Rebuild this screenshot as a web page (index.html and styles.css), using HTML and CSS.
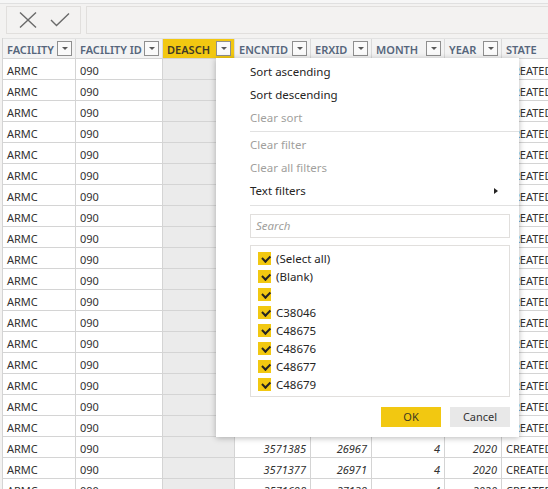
FILE: index.html
```html
<!DOCTYPE html>
<html>
<head>
<meta charset="utf-8">
<link rel="stylesheet" href="styles.css">
</head>
<body>
<div class="app">
  <div class="topstrip"></div>
  <div class="formula">
    <div class="fbtns">
      <svg class="ico" width="18" height="16" viewBox="0 0 18 16"><path d="M1 0.5 L17 15.5 M17 0.5 L1 15.5" stroke="#6a6a6a" stroke-width="1.4" fill="none"/></svg>
      <svg class="ico" width="20" height="14" viewBox="0 0 20 14"><path d="M1 7 L6.5 12.5 L19 0.5" stroke="#6a6a6a" stroke-width="1.4" fill="none"/></svg>
    </div>
    <div class="finput"></div>
  </div>
  <div class="grid">
    <div class="row head">
      <div class="hc"><span>FACILITY</span><i class="fb"></i></div>
      <div class="hc"><span>FACILITY ID</span><i class="fb"></i></div>
      <div class="hc sel"><span>DEASCH</span><i class="fb"></i></div>
      <div class="hc"><span>ENCNTID</span><i class="fb"></i></div>
      <div class="hc"><span>ERXID</span><i class="fb"></i></div>
      <div class="hc"><span>MONTH</span><i class="fb"></i></div>
      <div class="hc"><span>YEAR</span><i class="fb"></i></div>
      <div class="hc"><span>STATE</span><i class="fb"></i></div>
    </div>
    <div id="rows"></div>
  </div>

  <div class="popup">
    <div class="mi">Sort ascending</div>
    <div class="mi">Sort descending</div>
    <div class="mi dis">Clear sort</div>
    <div class="sep"></div>
    <div class="mi dis">Clear filter</div>
    <div class="mi dis">Clear all filters</div>
    <div class="mi sub">Text filters<i class="arrow"></i></div>
    <div class="sep s2"></div>
    <div class="search">Search</div>
    <div class="list">
      <div class="li"><i class="cb"></i>(Select all)</div>
      <div class="li"><i class="cb"></i>(Blank)</div>
      <div class="li"><i class="cb"></i></div>
      <div class="li"><i class="cb"></i>C38046</div>
      <div class="li"><i class="cb"></i>C48675</div>
      <div class="li"><i class="cb"></i>C48676</div>
      <div class="li"><i class="cb"></i>C48677</div>
      <div class="li"><i class="cb"></i>C48679</div>
    </div>
    <div class="btns">
      <div class="btn ok">OK</div>
      <div class="btn cancel">Cancel</div>
    </div>
  </div>
</div>
<script>
var data = [
["3571203","26881"],["3571207","26883"],["3571212","26885"],["3571219","26887"],
["3571224","26890"],["3571230","26893"],["3571236","26899"],["3571241","26902"],
["3571250","26907"],["3571262","26911"],["3571274","26918"],["3571289","26924"],
["3571301","26930"],["3571318","26936"],["3571326","26941"],["3571340","26949"],
["3571352","26955"],["3571364","26961"],["3571385","26967"],["3571377","26971"],
["3571698","27139"]
];
var html = "";
for (var i = 0; i < data.length; i++) {
  html += '<div class="row">' +
    '<div class="c">ARMC</div>' +
    '<div class="c">090</div>' +
    '<div class="c gray"></div>' +
    '<div class="c num">' + data[i][0] + '</div>' +
    '<div class="c num">' + data[i][1] + '</div>' +
    '<div class="c num">4</div>' +
    '<div class="c num">2020</div>' +
    '<div class="c">CREATED</div>' +
    '</div>';
}
document.getElementById("rows").innerHTML = html;
</script>
</body>
</html>
```
FILE: styles.css
```css
* { box-sizing: border-box; }
html, body {
  margin: 0;
  padding: 0;
  width: 548px;
  height: 489px;
  overflow: hidden;
  background: #f3f2f1;
  font-family: "Noto Sans", "Open Sans", sans-serif;
}
.app {
  position: relative;
  width: 548px;
  height: 489px;
  overflow: hidden;
}
.topstrip {
  height: 4px;
  background: #f6f6f6;
  border-bottom: 1px solid #e0e0e0;
}
.formula {
  display: flex;
  gap: 5px;
  padding: 2px 0 0 6px;
  height: 34px;
}
.fbtns {
  width: 75px;
  height: 28px;
  border: 1px solid #e1dfdd;
  display: flex;
  align-items: center;
  padding-left: 12px;
  gap: 13px;
}
.finput {
  flex: 1;
  height: 28px;
  border: 1px solid #e1dfdd;
  border-right: none;
}
.grid {
  margin-left: 2px;
  border-left: 1px solid #d4d4d4;
  width: 620px;
}
.row {
  display: grid;
  grid-template-columns: 73px 87px 72px 76px 61px 73px 57px 120px;
  height: 21px;
}
.head {
  background: #f3f3f3;
  border-top: 1px solid #e2e2e2;
}
.hc {
  display: flex;
  align-items: center;
  justify-content: space-between;
  padding: 0 3px 0 4px;
  border-right: 1px solid #dadada;
  border-bottom: 1px solid #d4d4d4;
  font-size: 11px;
  font-weight: 600;
  color: #56667c;
  white-space: nowrap;
}
.hc span { padding-top: 2px; }
.hc.sel {
  background: #f2c811;
  color: #3f3a26;
}
.fb {
  position: relative;
  display: block;
  width: 15px;
  height: 15px;
  border: 1px solid #8f8f8f;
  background: #fafafa;
  flex: none;
}
.fb::after {
  content: "";
  position: absolute;
  left: 4px;
  top: 5px;
  border-left: 3px solid transparent;
  border-right: 3px solid transparent;
  border-top: 3px solid #5a5a5a;
}
.c {
  height: 21px;
  line-height: 23px;
  padding: 0 4px;
  border-right: 1px solid #d4d4d4;
  border-bottom: 1px solid #d4d4d4;
  background: #fff;
  font-size: 11px;
  color: #323130;
  white-space: nowrap;
  overflow: hidden;
}
.c.gray { background: #ebebeb; }
.c.num {
  text-align: right;
  font-style: italic;
}

/* popup */
.popup {
  position: absolute;
  left: 216px;
  top: 58px;
  width: 303px;
  height: 379px;
  background: #fff;
  box-shadow: 0 1px 6px rgba(0,0,0,0.28);
  padding: 2px 9px 10px 0;
  font-size: 11.5px;
  color: #252423;
}
.mi {
  height: 23px;
  line-height: 23px;
  padding-left: 34px;
  display: flex;
  align-items: center;
  justify-content: space-between;
}
.mi.dis { color: #a19f9d; }
.arrow {
  display: block;
  margin-right: 12px;
  border-top: 3.5px solid transparent;
  border-bottom: 3.5px solid transparent;
  border-left: 4px solid #252423;
}
.sep {
  height: 1px;
  background: #e1e1e1;
  margin: 2px -9px 1px 34px;
}
.sep.s2 { margin-top: 3px; }
.search {
  margin: 8px 0 0 34px;
  height: 24px;
  border: 1px solid #e1dfdd;
  padding-left: 5px;
  line-height: 22px;
  font-style: italic;
  color: #a19f9d;
  font-size: 11.5px;
}
.list {
  margin: 7px 0 0 34px;
  height: 152px;
  border: 1px solid #e1dfdd;
  padding: 3px 0 0 7px;
}
.li {
  height: 18px;
  display: flex;
  align-items: center;
  gap: 5px;
}
.cb {
  display: block;
  width: 13px;
  height: 13px;
  background: #f2c811;
  position: relative;
}
.cb::after {
  content: "";
  position: absolute;
  left: 3.5px;
  top: 3px;
  width: 6px;
  height: 3.5px;
  border-left: 2px solid #252423;
  border-bottom: 2px solid #252423;
  transform: rotate(-45deg);
  transform-origin: center;
}
.btns {
  display: flex;
  justify-content: flex-end;
  gap: 9px;
  margin-top: 10px;
}
.btn {
  width: 60px;
  height: 20px;
  line-height: 20px;
  text-align: center;
  font-size: 11px;
}
.btn.ok { background: #f2c811; color: #3b3a20; }
.btn.cancel { background: #e8e8e8; color: #333; }
```
